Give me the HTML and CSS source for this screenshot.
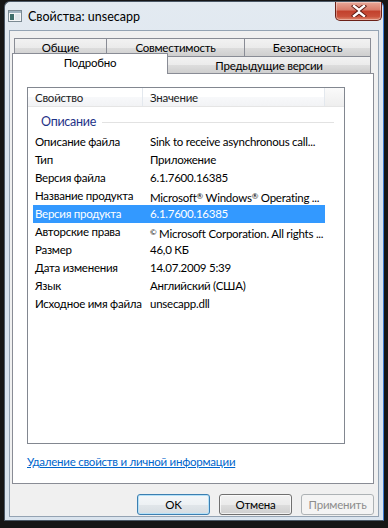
FILE: index.html
```html
<!DOCTYPE html>
<html>
    <head>
        <meta charset="utf-8">
        <link rel="stylesheet" href="styles.css">
    </head>
    <body>
        <div class="window">
            <div class="titlebar">
                <svg class="app-icon" width="14" height="12" viewBox="0 0 14 12">
                    <rect x="0.5" y="0.5" width="13" height="11" fill="#f4f6f7" stroke="#7b8a93"/>
                    <rect x="1" y="1" width="12" height="2" fill="#9fb3bf"/>
                    <rect x="2" y="4" width="4" height="6" fill="#3f6e6a"/>
                    <rect x="7" y="4" width="5" height="6" fill="#dfe6ea"/>
                </svg>
                <span class="title">Свойства: unsecapp</span>
                <div class="close-btn">
                    <svg width="16" height="12" viewBox="0 0 16 12">
                        <path d="M3 1 L8 5 L13 1 M3 11 L8 7 L13 11" fill="none" stroke="#5a1810" stroke-width="4.2" stroke-linecap="square"/>
                        <path d="M3 1 L8 5 L13 1 M3 11 L8 7 L13 11" fill="none" stroke="#ffffff" stroke-width="2.4" stroke-linecap="square"/>
                    </svg>
                </div>
            </div>

            <div class="client">
                <div class="tabs">
                    <div class="tab-row tab-row-back">
                        <div class="tab tab-general">Общие</div>
                        <div class="tab tab-compat">Совместимость</div>
                        <div class="tab tab-security">Безопасность</div>
                    </div>
                    <div class="tab-row tab-row-front">
                        <div class="tab tab-active">Подробно</div>
                        <div class="tab tab-prev">Предыдущие версии</div>
                    </div>
                </div>

                <div class="panel">
                    <div class="listbox">
                        <div class="list-header">
                            <div class="hcell hcell-name">Свойство</div>
                            <div class="hcell hcell-value">Значение</div>
                            <div class="hcell hcell-rest"></div>
                        </div>
                        <div class="group">
                            <span class="group-title">Описание</span>
                            <span class="group-line"></span>
                        </div>
                        <ul class="rows" id="rows"></ul>
                    </div>
                    <a class="remove-link" href="#">Удаление свойств и личной информации</a>
                </div>

                <div class="buttons">
                    <button class="btn btn-default">OK</button>
                    <button class="btn">Отмена</button>
                    <button class="btn btn-disabled">Применить</button>
                </div>
            </div>
        </div>
        <script>
            var props = [
                ["Описание файла", "Sink to receive asynchronous call..."],
                ["Тип", "Приложение"],
                ["Версия файла", "6.1.7600.16385"],
                ["Название продукта", "Microsoft<sup>®</sup> Windows<sup>®</sup> Operating ..."],
                ["Версия продукта", "6.1.7600.16385"],
                ["Авторские права", "<sup>©</sup> Microsoft Corporation. All rights ..."],
                ["Размер", "46,0 КБ"],
                ["Дата изменения", "14.07.2009 5:39"],
                ["Язык", "Английский (США)"],
                ["Исходное имя файла", "unsecapp.dll"]
            ];
            var selected = 4;

            var html = "";
            props.forEach(function (p, i) {
                html += "<li class=\"row" + (i == selected ? " row-selected" : "") + "\">";
                html +=     "<span class=\"cell-name\">" + p[0] + "</span>";
                html +=     "<span class=\"cell-value\">" + p[1] + "</span>";
                html += "</li>";
            });
            document.getElementById("rows").innerHTML = html;
        </script>
    </body>
</html>
```

FILE: styles.css
```css
* {
    box-sizing: border-box;
}

body {
    margin: 0;
    background: #161616;
    font-family: 'Lato', sans-serif;
    font-size: 11.5px;
    letter-spacing: -0.25px;
    color: #000;
}

ul, li {
    margin: 0;
    padding: 0;
    list-style: none;
}

.window {
    margin: 1px 0 0 4px;
    width: 380px;
    height: 520px;
    border: 1px solid #4b5866;
    border-right-color: #3c7ad0;
    border-radius: 6px 6px 0 0;
    background: linear-gradient(to bottom, #e3eaf1, #d6e1ed 40%, #dae4ee);
}

.titlebar {
    display: flex;
    align-items: center;
    height: 27px;
    padding-left: 3px;
}

.app-icon {
    margin-top: 1px;
}

.title {
    margin-left: 6px;
    margin-top: 1px;
    font-size: 12.5px;
    letter-spacing: 0;
    color: #000;
}

.close-btn {
    align-self: flex-start;
    margin-left: auto;
    margin-right: 1px;
    width: 47px;
    height: 19px;
    display: flex;
    align-items: center;
    justify-content: center;
    border: 1px solid #6b2118;
    border-top: none;
    border-radius: 0 0 5px 5px;
    background: linear-gradient(to bottom, #e8a898, #d77a68 45%, #c2402c 50%, #c9503a 80%, #e08a70);
    box-shadow: inset 0 0 0 1px rgba(255, 255, 255, 0.35);
}

.client {
    margin: 1px 4px 0 4px;
    height: 487px;
    border: 1px solid #94a3b3;
    background: #f0f0f0;
}

/* tabs */

.tabs {
    padding-top: 7px;
}

.tab-row {
    display: flex;
}

.tab-row-back {
    margin-left: 4px;
    height: 18px;
}

.tab-row-front {
    margin-left: 2px;
    height: 17px;
    align-items: flex-end;
}

.tab {
    display: flex;
    align-items: center;
    justify-content: center;
    height: 100%;
    border: 1px solid #898c95;
    border-bottom: none;
    background: linear-gradient(to bottom, #f2f2f2, #ebebeb 50%, #dddddd 51%, #cfcfcf);
    color: #000;
    padding-bottom: 1px;
}

.tab + .tab {
    border-left: none;
}

.tab-general { width: 93px; }
.tab-compat { width: 138px; }
.tab-security { width: 126px; }
.tab-prev { width: 203px; padding-bottom: 0; }

.tab-active {
    position: relative;
    width: 156px;
    height: 21px;
    margin-bottom: -1px;
    background: #fff;
    border-right: 1px solid #898c95;
    padding-bottom: 3px;
}

.tab-active + .tab {
    border-left: none;
}

.panel {
    margin: 0 4px 0 2px;
    height: 411px;
    border: 1px solid #898c95;
    background: #fff;
    padding: 13px 0 0 14px;
}

/* list */

.listbox {
    width: 318px;
    height: 357px;
    border: 1px solid #828790;
    overflow: hidden;
}

.list-header {
    display: flex;
    height: 19px;
    background: linear-gradient(to bottom, #ffffff, #ffffff 50%, #f7f8fa 51%, #f2f3f5);
    border-bottom: 1px solid #e5e5e5;
}

.hcell {
    display: flex;
    align-items: center;
    padding-left: 7px;
    border-right: 1px solid #e3e8ee;
    color: #1b1b1b;
}

.hcell-name { width: 115px; }
.hcell-value { width: 182px; }
.hcell-rest {
    flex: 1;
    border-right: none;
    background: linear-gradient(to bottom, #fafafa, #eeeeee);
}

.group {
    display: flex;
    align-items: center;
    height: 26px;
    padding: 6px 10px 2px 13px;
}

.group-title {
    font-size: 12.5px;
    color: #1e3287;
    line-height: 18px;
}

.group-line {
    flex: 1;
    height: 1px;
    margin-left: 6px;
    background: #e2e2e2;
}

.rows {
    margin-left: 5px;
    width: 292px;
}

.row {
    display: flex;
    height: 18px;
    line-height: 18px;
    white-space: nowrap;
}

.cell-name {
    width: 110px;
    padding-left: 2px;
    overflow: hidden;
}

.cell-value {
    flex: 1;
    padding-left: 7px;
    overflow: hidden;
}

.cell-value sup {
    font-size: 8px;
    vertical-align: 3px;
}

.row-selected {
    background: #3399ff;
    color: #fff;
}

.remove-link {
    display: inline-block;
    margin-top: 10px;
    margin-left: 0;
    line-height: 16px;
    color: #0066cc;
    text-decoration: underline;
}

/* buttons */

.buttons {
    display: flex;
    justify-content: flex-end;
    gap: 9px;
    margin: 10px 4px 0 0;
}

.btn {
    width: 73px;
    height: 21px;
    padding: 0;
    font-family: 'Lato', sans-serif;
    font-size: 11.5px;
    letter-spacing: -0.25px;
    color: #000;
    border: 1px solid #707070;
    border-radius: 3px;
    background: linear-gradient(to bottom, #f2f2f2, #ebebeb 50%, #dddddd 51%, #cfcfcf);
    box-shadow: inset 0 0 0 1px rgba(255, 255, 255, 0.7);
}

.btn-default {
    border-color: #3c7fb1;
    box-shadow: inset 0 0 0 1px #b5e1f8;
    background: linear-gradient(to bottom, #f4f7f9, #edf1f4 50%, #e1e6ea 51%, #d6dde2);
}

.btn-disabled {
    color: #8d8d8d;
    border-color: #adb2b5;
    background: #f4f4f4;
    box-shadow: none;
}
```
